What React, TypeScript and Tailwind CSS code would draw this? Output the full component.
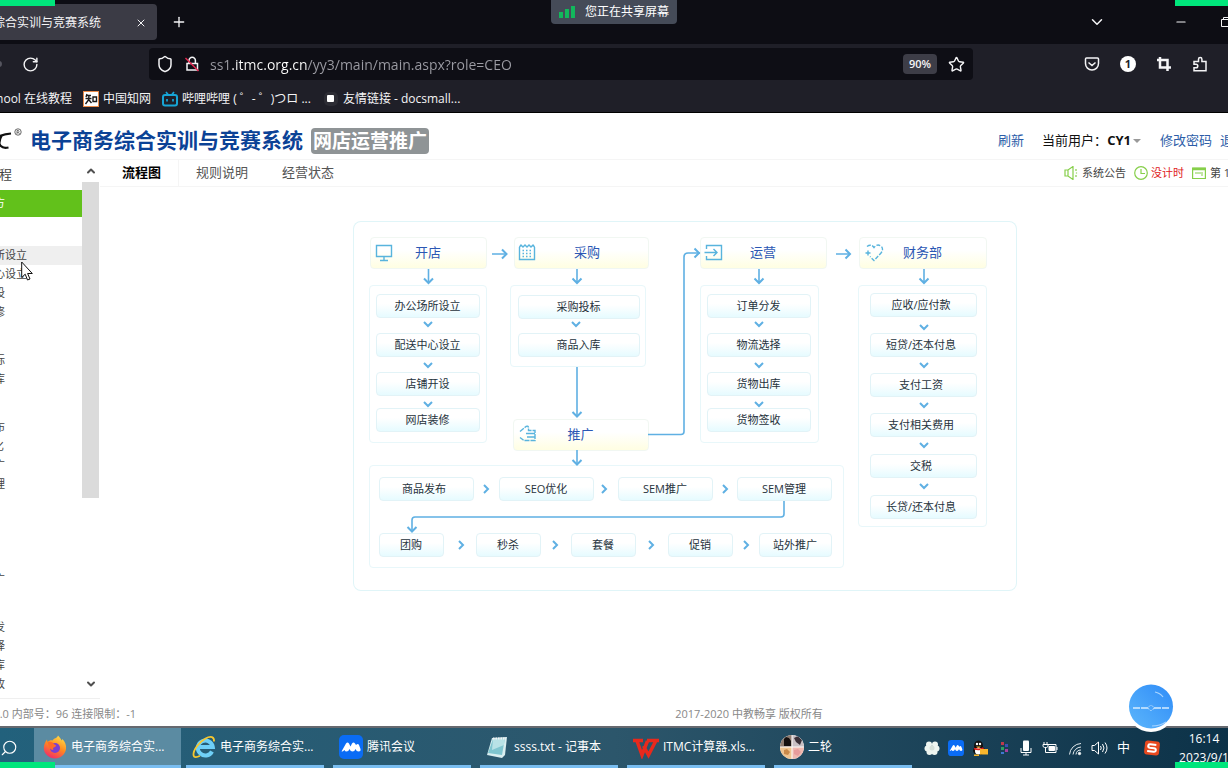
import React from 'react';
import {
    ChevronDown,
    ChevronUp,
    Minus,
    Plus,
    RotateCw,
    Search,
    Shield,
    Star,
    X,
} from 'lucide-react';

const menu = [
    { title: '开店', items: ['办公场所设立', '配送中心设立', '店铺开设', '网店装修'] },
    { title: '采购', items: ['采购投标', '商品入库'] },
    { title: '推广', items: ['商品发布', 'SEO优化', 'SEM推广', 'SEM管理', '团购', '秒杀', '套餐', '促销', '站外推广'] },
    { title: '运营', items: ['订单分发', '物流选择', '货物出库', '货物签收'] },
];

// places are relative to the diagram frame
const groups = [
    'left-[16px] top-[64px] w-[118px] h-[158px]',
    'left-[157px] top-[64px] w-[136px] h-[82px]',
    'left-[347px] top-[64px] w-[119px] h-[158px]',
    'left-[505px] top-[64px] w-[129px] h-[242px]',
    'left-[16px] top-[244px] w-[475px] h-[103px]',
];

const heads = [
    { text: '开店', place: 'left-[17px] top-[16px] w-[117px]' },
    { text: '采购', place: 'left-[161px] top-[16px] w-[135px] pl-3' },
    { text: '运营', place: 'left-[347px] top-[16px] w-[127px]' },
    { text: '财务部', place: 'left-[506px] top-[16px] w-[128px]' },
    { text: '推广', place: 'left-[160px] top-[198px] w-[136px]' },
];

const nodes = [
    { text: '办公场所设立', place: 'left-[23px] top-[73px] w-[104px]' },
    { text: '配送中心设立', place: 'left-[23px] top-[112px] w-[104px]' },
    { text: '店铺开设', place: 'left-[23px] top-[151px] w-[104px]' },
    { text: '网店装修', place: 'left-[23px] top-[187px] w-[104px]' },
    { text: '采购投标', place: 'left-[165px] top-[74px] w-[122px]' },
    { text: '商品入库', place: 'left-[165px] top-[112px] w-[122px]' },
    { text: '订单分发', place: 'left-[354px] top-[73px] w-[104px]' },
    { text: '物流选择', place: 'left-[354px] top-[112px] w-[104px]' },
    { text: '货物出库', place: 'left-[354px] top-[151px] w-[104px]' },
    { text: '货物签收', place: 'left-[354px] top-[187px] w-[104px]' },
    { text: '应收/应付款', place: 'left-[517px] top-[72px] w-[107px] pr-1' },
    { text: '短贷/还本付息', place: 'left-[517px] top-[112px] w-[107px] pr-1' },
    { text: '支付工资', place: 'left-[517px] top-[152px] w-[107px] pr-1' },
    { text: '支付相关费用', place: 'left-[517px] top-[192px] w-[107px] pr-1' },
    { text: '交税', place: 'left-[517px] top-[233px] w-[107px] pr-1' },
    { text: '长贷/还本付息', place: 'left-[517px] top-[274px] w-[107px] pr-1' },
    { text: '商品发布', place: 'left-[26px] top-[256px] w-[95px] pr-1' },
    { text: 'SEO优化', place: 'left-[146px] top-[256px] w-[95px]' },
    { text: 'SEM推广', place: 'left-[265px] top-[256px] w-[95px]' },
    { text: 'SEM管理', place: 'left-[384px] top-[256px] w-[95px]' },
    { text: '团购', place: 'left-[26px] top-[312px] w-[65px]' },
    { text: '秒杀', place: 'left-[123px] top-[312px] w-[65px]' },
    { text: '套餐', place: 'left-[218px] top-[312px] w-[65px]' },
    { text: '促销', place: 'left-[315px] top-[312px] w-[65px]' },
    { text: '站外推广', place: 'left-[406px] top-[312px] w-[73px]' },
];

const downChevrons = [
    [75, 103], [75, 144], [75, 183],
    [223, 103],
    [406, 103], [406, 144], [406, 183],
    [571, 106], [571, 144], [571, 184], [571, 224], [571, 265],
];

const rightChevrons = [
    [133, 268], [251, 268], [372, 268],
    [108, 324], [202, 324], [298, 324], [393, 324],
];

const Connectors: React.FC = () => (
    <svg className="absolute inset-0 h-full w-full" viewBox="0 0 664 370" fill="none" stroke="#5fb0e3" strokeWidth="1.6">
        {/* long lines */}
        <path d="M75.500 48v14M224 48v14M406 48v14M571 48v14M224 146v49M224 229v14" />
        <path d="M139 33h14M483 33h14" />
        <path d="M295 213.500h33q3 0 3-3V36q0-4 4-4h12" />
        <path d="M431 280v13q0 3-3 3H62q-3 0-3 3v11" />
        {/* arrow heads */}
        <g strokeWidth="2">
            <path d="M71 57.500l4.500 4.500 4.500-4.500M219.500 57.500l4.500 4.500 4.500-4.500M401.500 57.500l4.500 4.500 4.500-4.500M566.500 57.500l4.500 4.500 4.500-4.500" />
            <path d="M219.500 191l4.500 4.500 4.500-4.500M219.500 239l4.500 4.500 4.500-4.500M54.500 306l4.500 4.500 4.500-4.500" />
            <path d="M149 28.500l4.500 4.500-4.500 4.500M492.500 28.500l4.500 4.500-4.500 4.500M341.500 27.500l4.500 4.500-4.500 4.500" />
            {downChevrons.map(([x, y]) => (
                <path key={`${x}-${y}`} d={`M${x - 4} ${y - 2}l4 4 4-4`} />
            ))}
            {rightChevrons.map(([x, y]) => (
                <path key={`${x}-${y}`} d={`M${x - 2} ${y - 4}l4 4-4 4`} />
            ))}
        </g>
        {/* icons of the heads */}
        <g stroke="#58b4dd" strokeWidth="1.4">
            <path d="M23.500 24.500h15v11h-15zM31 36v3.500M27 39.500h8" />
            <path d="M166.500 26v12.500h15V26M166.500 26l1.500-2 2 2 2-2 2 2 2-2 2 2 2-2 1.500 2" />
            <path d="M169.500 29.500h10M169.500 32.500h10M169.500 35.500h10" strokeDasharray="1.500 2" />
            <path d="M353.500 28v-3.500h15v14h-15V35M351.500 31.500h12M360.500 28l3.500 3.500-3.500 3.500" />
            <path d="M514 25.500q4-3 7 1 3-4 7-1.500 3 3 0 7l-7 7.500-4-4" strokeDasharray="4 1.500" />
            <path d="M512.500 32h5M515 29.500v5" />
            <path d="M167 210.500l6-5q2-1 2.500 1v3h6.500v10h-11l-4-3" strokeDasharray="5 1" />
            <path d="M173 212.500h9M174 216h8" />
        </g>
    </svg>
);

const FlowChart: React.FC = () => (
    <section aria-label="流程图" className="relative h-[370px] w-[664px] shrink-0 rounded-lg ring-1 ring-[#e0f5f8] ring-inset">
        {groups.map((place) => (
            <div key={place} className={`absolute rounded border border-[#e8f7fa] ${place}`} />
        ))}
        {heads.map((head) => (
            <div
                key={head.text}
                className={`absolute flex h-8 items-center justify-center rounded-sm border border-[#f1f7f2] bg-linear-to-b from-white from-40% to-[#fffee2] text-[13px] text-[#2b57b4] ${head.place}`}
            >
                {head.text}
            </div>
        ))}
        {nodes.map((node) => (
            <div
                key={node.text}
                className={`absolute flex h-6 items-center justify-center rounded-sm border border-[#e2f3f7] bg-linear-to-b from-white from-40% to-[#e6fbff] text-[11px] whitespace-nowrap text-[#26323c] ${node.place}`}
            >
                {node.text}
            </div>
        ))}
        <Connectors />
    </section>
);

const MeetingIcon: React.FC<{ className: string }> = ({ className }) => (
    <svg className={className} viewBox="0 0 24 24">
        <rect width="24" height="24" rx="5" fill="#0a6cf5" />
        <path d="M2.500 16.500L7 8.500q1.500-2 3 0l1.500 3L13 8.500q1.500-2 3 0l1 1.500q2-2 3 0l1.500 4q.5 2.500-2 2.500-2 0-3-2.500-1 2.500-3 2.500t-3-2.500q-1 2.500-3 2.500-1.500 0-2-1.500-1 1.500-4 1.500z" fill="#fff" />
    </svg>
);

const FirefoxIcon: React.FC = () => (
    <svg className="size-6" viewBox="0 0 24 24">
        <defs>
            <linearGradient id="fox" x1="0.8" y1="0" x2="0.3" y2="1">
                <stop offset="0" stopColor="#ffe14a" />
                <stop offset="0.5" stopColor="#ff8a1f" />
                <stop offset="1" stopColor="#f2296b" />
            </linearGradient>
        </defs>
        <path d="M15 .5c2 2 3 3.500 3.500 5 .5-.5.7-1 .8-1.500C22 6.500 23.500 10 23 14c-.8 5.500-5.500 9.500-11 9.500S1 19 .8 13.500C.7 10 2 7 4 4.500l.5 2.500C6 5.500 8 5 9.500 5.500 11 3 14 3.500 15 .5z" fill="url(#fox)" />
        <circle cx="12" cy="13" r="5" fill="#7b3fd1" />
        <path d="M4.500 7C8 6 10 7.500 11.500 9.500c2 .5 2 1.500.5 2.500-2 .5-2.500 1.500-1.500 3-2.500 0-4-1.500-4.500-3z" fill="#ff6a2a" />
    </svg>
);

const IeIcon: React.FC = () => (
    <svg className="size-6" viewBox="0 0 24 24" fill="none">
        <path d="M20 16.500a7.500 7.500 0 1 1 .8-4.500H8" stroke="#6fd0f7" strokeWidth="4" />
        <path d="M22 6.500C22.500 2 19 .5 13.500 3.500 7 7 1 15 1.500 20c.3 3 3.500 2.500 6.500.8" stroke="#f6c72f" strokeWidth="1.800" />
    </svg>
);

const NotepadIcon: React.FC = () => (
    <svg className="size-6" viewBox="0 0 24 24">
        <path d="M6 3l15-1-2 18-3 3-15-3z" fill="#d9eef0" />
        <path d="M7 4l12-1-3 17-14-2z" fill="#7fc5cf" />
        <path d="M7 4l12-1-1 7-12 5z" fill="#b8e2e6" />
        <path d="M7 3.500h13" stroke="#f4f4f4" strokeWidth="2" strokeDasharray="1.500 1" />
    </svg>
);

const WpsIcon: React.FC = () => (
    <svg className="h-6 w-[26px]" viewBox="0 0 26 24" fill="none" stroke="#e8291c" strokeWidth="3.500">
        <path d="M0 5.500h10M4 6l5 14 5.500-14M10.500 11l5 9L23 5.500M14 5.500h12" />
    </svg>
);

const AvatarIcon: React.FC = () => (
    <svg className="size-6" viewBox="0 0 24 24">
        <defs>
            <clipPath id="avatar">
                <circle cx="12" cy="12" r="12" />
            </clipPath>
        </defs>
        <g clipPath="url(#avatar)">
            <rect width="24" height="24" fill="#fff" />
            <path d="M0 0h11.500v11.500H0z" fill="#8d7b70" />
            <path d="M4 4l2-2 3 1 2 3v5H4z" fill="#15100f" />
            <path d="M12.500 0H24v11.500H12.500z" fill="#c9c0c4" />
            <path d="M14 3l4-2 4 4-2 5-4-3z" fill="#3b3038" />
            <path d="M0 12.500h11.500V24H0z" fill="#efc490" />
            <path d="M4 15l3-1 3 3-2 3-4-1z" fill="#c98a4a" />
            <path d="M12.500 12.500H24V24H12.500z" fill="#f0b9b0" />
            <path d="M14 15l4-1 3 3-3 4-4-2z" fill="#e89c9c" />
        </g>
    </svg>
);

const tasks = [
    { text: '电子商务综合实...', icon: <FirefoxIcon />, active: true },
    { text: '电子商务综合实...', icon: <IeIcon /> },
    { text: '腾讯会议', icon: <MeetingIcon className="size-6" /> },
    { text: 'ssss.txt - 记事本', icon: <NotepadIcon /> },
    { text: 'ITMC计算器.xls...', icon: <WpsIcon /> },
    { text: '二轮', icon: <AvatarIcon /> },
];

const Browser: React.FC = () => (
    <header className="border-b border-black bg-[#1f1f28] text-[12px] text-[#f4f4f6]">
        <div className="flex h-11 items-center bg-[#0d0d14]">
            <div className="flex h-9 w-[157px] items-center justify-end gap-[34px] overflow-hidden rounded-r bg-[#3b3b45] pt-px pr-[10px]">
                <span className="shrink-0 whitespace-nowrap">电子商务综合实训与竞赛系统</span>
                <button aria-label="关闭标签页" className="shrink-0">
                    <X className="size-3" />
                </button>
            </div>
            <button aria-label="新标签页" className="ml-[14px]">
                <Plus className="size-4" />
            </button>
            <div className="-mr-2 ml-auto flex items-center">
                <button aria-label="所有标签页" className="mr-[68px]">
                    <ChevronDown className="size-[18px]" />
                </button>
                <button aria-label="最小化" className="mr-[32px]">
                    <Minus className="size-[14px]" />
                </button>
                <button aria-label="还原" className="mr-1">
                    <svg className="size-3" viewBox="0 0 12 12" fill="none" stroke="currentColor">
                        <path d="M1.500 3.500h7v7h-7zM3.500 3.500v-2h7v7h-2" />
                    </svg>
                </button>
            </div>
        </div>

        <div className="flex h-10 items-center">
            <div className="flex w-[149px] items-center">
                <span className="-ml-1 size-[6px] rounded-full bg-[#55555f]" />
                <button aria-label="刷新页面" className="ml-5">
                    <RotateCw className="size-[17px]" />
                </button>
            </div>
            <div className="flex h-8 flex-1 items-center rounded bg-[#0e0e15] pr-2 pl-[7px]">
                <Shield className="size-[18px]" />
                <svg className="ml-[10px] size-4" viewBox="0 0 16 16" fill="none" stroke="currentColor" strokeWidth="1.500">
                    <path d="M3 7.500h10.500v6.500H3zM5 7V4.500a3.200 3.200 0 0 1 6.400 0V7" />
                    <path d="M1.500 2l13 13" stroke="#e22850" />
                </svg>
                <input
                    aria-label="地址"
                    defaultValue="ss1.itmc.org.cn/yy3/main/main.aspx?role=CEO"
                    className="ml-[10px] min-w-0 flex-1 bg-[linear-gradient(to_right,#9c9ca4_22px,#ffffff_22px,#ffffff_97px,#9c9ca4_97px)] bg-clip-text text-[14px] text-transparent outline-none"
                />
                <button className="h-5 rounded bg-[#3d3d47] px-[6px] text-[11px] font-semibold">90%</button>
                <button aria-label="加入书签" className="ml-[11px]">
                    <Star className="size-[17px]" />
                </button>
            </div>
            <div className="flex w-[255px] items-center justify-end gap-[20px] overflow-hidden pr-5">
                <button aria-label="Pocket">
                    <svg className="size-4" viewBox="0 0 16 16" fill="none" stroke="currentColor" strokeWidth="1.500">
                        <path d="M1.500 3q0-1 1-1h11q1 0 1 1v4.500a6.500 6.500 0 0 1-13 0zM4.500 6.500L8 9.500l3.500-3" />
                    </svg>
                </button>
                <button aria-label="通知" className="size-4 rounded-full bg-white text-[11px] leading-4 font-bold text-[#1f1f28]">
                    1
                </button>
                <button aria-label="截图">
                    <svg className="size-4" viewBox="0 0 16 16" fill="none" stroke="currentColor" strokeWidth="2.500">
                        <path d="M4 1v10.500h11M1 4h10.500v11" />
                    </svg>
                </button>
                <button aria-label="扩展">
                    <svg className="size-4" viewBox="0 0 16 16" fill="none" stroke="currentColor" strokeWidth="1.500">
                        <path d="M2 8V5.500h4.500V3.200a1.700 1.700 0 0 1 3.400 0v2.300H14v9.300H2v-3h2a1.700 1.700 0 0 0 0-3.600H2z" />
                    </svg>
                </button>
            </div>
        </div>

        <nav className="flex h-7 items-center overflow-hidden pt-px whitespace-nowrap">
            <a href="#" className="flex w-[72px] justify-end">w3school 在线教程</a>
            <a href="#" className="ml-[11px] flex items-center gap-1">
                <svg className="size-4" viewBox="0 0 16 16">
                    <rect width="16" height="16" fill="#e98b4a" />
                    <rect x="1" y="1" width="14" height="14" fill="#fff" />
                    <path d="M4 3L3 6M3 4.500h5M2.500 7.500h6M6 4.500L5.500 9l-3 4M6 9l2.500 3M10 6h3.500v4.500H10z" fill="none" stroke="#1a1a1a" strokeWidth="1.400" />
                </svg>
                中国知网
            </a>
            <a href="#" className="ml-[11px] flex items-center gap-1">
                <svg className="size-4" viewBox="0 0 16 16" fill="none" stroke="#17a5d6" strokeWidth="2">
                    <rect x="1" y="4" width="14" height="10.500" rx="2" />
                    <path d="M4 1l2 2.500M12 1l-2 2.500M5 8v2.500M11 8v2.500" strokeWidth="1.700" />
                </svg>
                哔哩哔哩 ( ゜- ゜)つロ ...
            </a>
            <a href="#" className="ml-3 flex items-center gap-1">
                <svg className="size-4" viewBox="0 0 16 16">
                    <rect x="1" y="1" width="14" height="14" rx="5" fill="#2c2c34" />
                    <rect x="4" y="4" width="7" height="7" rx="1" fill="#fff" />
                </svg>
                友情链接 - docsmall...
            </a>
        </nav>
    </header>
);

const PageHeader: React.FC = () => (
    <div className="flex h-[47px] shrink-0 items-center overflow-hidden border-b border-[#f5f5f5] pt-[9px] whitespace-nowrap">
        <svg className="h-7 w-[30px] shrink-0" viewBox="0 0 30 28" fill="none">
            <path d="M11 6.500Q4 7-1 9.500M2 8q-3 5-2.500 9 2 5 9 3.500" stroke="#111" strokeWidth="2.200" />
            <circle cx="18" cy="5" r="3.200" stroke="#444" strokeWidth="0.800" />
            <path d="M17 7V3.500h1.500q1 1 0 1.800H17M18.500 5.300L19.500 7" stroke="#444" strokeWidth="0.700" />
        </svg>
        <h1 className="text-[21px] font-bold text-[#0b4296]">电子商务综合实训与竞赛系统</h1>
        <span className="ml-2 rounded bg-[#8f9496] px-[2px] text-[19px] leading-[26px] font-bold text-white">网店运营推广</span>
        <div className="-mr-[18px] ml-auto flex items-center text-[13px] text-[#2c5da8]">
            <a href="#" className="mr-[18px]">刷新</a>
            <span className="text-[#111]">当前用户：</span>
            <button className="mr-[19px] flex items-center gap-[2px] font-bold text-[#111]">
                CY1
                <span className="size-0 border-x-4 border-t-4 border-x-transparent border-t-[#999]" />
            </button>
            <a href="#" className="mr-2">修改密码</a>
            <a href="#">退出</a>
        </div>
    </div>
);

const Sidebar: React.FC = () => (
    <aside className="flex w-[100px] shrink-0 overflow-hidden border-b border-[#efefef]">
        <nav className="-ml-[60px] w-[142px] shrink-0 text-[11px] text-[#444]">
            <h2 className="flex h-[30px] items-center pl-5 text-[13px]">经营流程</h2>
            <a href="#" className="flex h-[27px] items-center bg-[#62c11b] pl-[43px] text-white">卖方</a>
            {menu.map((group) => (
                <div key={group.title}>
                    <h3 className="flex h-[29px] items-center pl-[21px]">{group.title}</h3>
                    {group.items.map((item) => (
                        <a
                            key={item}
                            href="#"
                            className={`flex h-[19px] items-center pl-[21px] ${item === '办公场所设立' ? 'bg-[#efefef]' : ''}`}
                        >
                            {item}
                        </a>
                    ))}
                </div>
            ))}
        </nav>
        <div className="flex w-[17px] shrink-0 flex-col items-center text-[#505050]">
            <ChevronUp className="my-[5px] size-3 shrink-0" strokeWidth={4} />
            <div className="h-[316px] w-full bg-[#dbdbdb]" />
            <ChevronDown className="mt-auto mb-2 size-3 shrink-0" strokeWidth={4} />
        </div>
    </aside>
);

const StatusBar: React.FC = () => (
    <div className="flex h-[27px] items-center overflow-hidden border-b border-[#f5f5f5] whitespace-nowrap">
        <div role="tablist" className="flex h-full items-center text-[13px] text-[#555]">
            <button role="tab" aria-selected="true" className="h-full border-r border-[#f5f5f5] pr-[17px] pl-[22px] font-bold text-black">
                流程图
            </button>
            <button role="tab" aria-selected="false" className="px-[17px]">规则说明</button>
            <button role="tab" aria-selected="false" className="px-[17px]">经营状态</button>
        </div>
        <div className="-mr-4 ml-auto flex items-center text-[11px] text-[#444]">
            <svg className="mr-1 size-[14px]" viewBox="0 0 14 14" fill="none" stroke="#86cf4a" strokeWidth="1.200">
                <path d="M1 4h3l5-3.500v13L4 10H1zM4 4v6M12 3v2M12.500 6.500v1M12 9v2" />
            </svg>
            <a href="#">系统公告</a>
            <svg className="mr-[3px] ml-2 size-[14px]" viewBox="0 0 14 14" fill="none" stroke="#86cf4a" strokeWidth="1.200">
                <circle cx="7" cy="7" r="6.300" />
                <path d="M7 3v4.500h4" />
            </svg>
            <span className="text-[#e02020]">没计时</span>
            <svg className="mr-1 ml-2 size-[14px]" viewBox="0 0 14 14" fill="none" stroke="#86cf4a" strokeWidth="1.200">
                <path d="M.600 2h12.800v10.500H.600zM3 7h8M9 9h2" />
                <path d="M.600 3h12.800" strokeWidth="2.500" />
            </svg>
            <span>第 1 年</span>
        </div>
    </div>
);

const Tray: React.FC = () => (
    <div className="ml-auto flex items-center text-white">
        <svg className="mr-2 size-4" viewBox="0 0 16 16" fill="#eef5f0">
            <circle cx="5" cy="4.500" r="3" />
            <circle cx="11" cy="4.500" r="3" />
            <circle cx="3.500" cy="8.500" r="3" />
            <circle cx="12.500" cy="8.500" r="3" />
            <circle cx="5.500" cy="12" r="3" />
            <circle cx="10.500" cy="12" r="3" />
            <circle cx="8" cy="8" r="2.500" fill="#d6e0d9" />
        </svg>
        <MeetingIcon className="mr-2 size-4" />
        <svg className="mr-2 size-4" viewBox="0 0 16 16">
            <ellipse cx="6.500" cy="6" rx="4.500" ry="5.500" fill="#111" />
            <ellipse cx="7" cy="10.500" rx="6" ry="4.500" fill="#111" />
            <ellipse cx="6.500" cy="11" rx="3.500" ry="3.500" fill="#fff" />
            <circle cx="5" cy="4" r="1.200" fill="#fff" />
            <circle cx="8" cy="4" r="1.200" fill="#fff" />
            <path d="M4 6.500h5l-2.500 1.500z" fill="#f5a623" />
            <path d="M2 8.500q5 2 9.500-.5" stroke="#e2231a" strokeWidth="1.800" fill="none" />
            <path d="M8 9h8v5.500H8zM2 14.500h5V16H2z" fill="#f8b62d" />
        </svg>
        <svg className="mr-[6px] size-4" viewBox="0 0 16 16">
            <path d="M5 2h3v3H5z" fill="#c03a4c" />
            <path d="M9 4h3v3H9z" fill="#3c4fb5" />
            <path d="M5 7h3v3H5z" fill="#2f9e62" />
            <path d="M9 9h3v3H9z" fill="#a63fa0" />
            <path d="M5 12h3v2H5z" fill="#3f77d0" />
        </svg>
        <svg className="mr-2 size-4" viewBox="0 0 16 16" fill="#fff">
            <rect x="5" y="0.500" width="6" height="10.500" rx="1" />
            <path d="M3 8v4.500h10V8M8 12v3M5 15h6" fill="none" stroke="#fff" />
        </svg>
        <svg className="mr-[9px] size-4" viewBox="0 0 16 16" fill="none" stroke="#fff">
            <path d="M5.500 4.500H14v8H3.500V9M15 7v3M2 2v2M5 2v2M1 4.500h5v2l-1.500 1h-2L1 6.500zM3.500 7.500V10" />
            <path d="M7 6.500h5.500v4H7z" fill="#fff" />
        </svg>
        <svg className="mr-2 size-4" viewBox="0 0 16 16" fill="none" stroke="#e4ecef">
            <path d="M2.500 14.500A12 12 0 0 1 14 3.500M6 14.500a8.500 8.500 0 0 1 8-7.500M9 14.500a5 5 0 0 1 5-4.500" />
            <circle cx="12.500" cy="13.500" r="1.200" fill="#fff" />
        </svg>
        <svg className="mr-2 h-4 w-[18px]" viewBox="0 0 18 16" fill="none" stroke="#fff">
            <path d="M1 5.500h2.500L7.500 2v12l-4-3.500H1zM9.500 6q1.500 2 0 4M11.500 4q3 4 0 8M14 2.500q4 5.500 0 11" />
        </svg>
        <span className="mr-[14px] text-[13px]">中</span>
        <svg className="size-4 rotate-6" viewBox="0 0 16 16">
            <rect x="0.500" y="1" width="15" height="14" rx="3" fill="#e8491f" />
            <path d="M12 4.500H6q-2 0-2 1.700T6 8h4q2 0 2 1.800t-2 1.700H3.500" fill="none" stroke="#fff" strokeWidth="2" />
        </svg>
        <div className="-mr-5 w-[88px] text-center text-[12px] leading-[19px]">
            <div>16:14</div>
            <div>2023/9/1</div>
        </div>
    </div>
);

const Taskbar: React.FC = () => (
    <footer className="flex h-[42px] shrink-0 items-center overflow-hidden border-t-2 border-[#66696f] bg-linear-to-r from-[#22617c] via-[#2c566b] via-50% to-[#0c3248] text-[12px] whitespace-nowrap text-white">
        <button aria-label="搜索" className="flex w-[34px]">
            <Search className="size-[18px] -scale-x-100" strokeWidth={1.500} />
        </button>
        {tasks.map((task, i) => (
            <button
                key={i}
                className={`flex h-full w-[147px] items-center ${task.active ? 'border-b-3 border-[#79bdf0] bg-[#5b8ba2] pt-px pl-[9px]' : 'pl-[5px]'}`}
            >
                {task.active ? (
                    <span className="flex items-center gap-1">{task.icon}{task.text}</span>
                ) : (
                    <span className="flex h-full w-[138px] items-center gap-1 border-b-3 border-[#79bdf0] pt-px pl-[6px]">{task.icon}{task.text}</span>
                )}
            </button>
        ))}
        <Tray />
    </footer>
);

const App: React.FC = () => {
    return (
        <div className="relative flex h-screen flex-col overflow-hidden bg-white font-['Open_Sans','Noto_Sans_CJK_SC',sans-serif]">
            <Browser />
            <PageHeader />
            <div className="flex min-h-0 flex-1">
                <Sidebar />
                <main className="flex min-w-0 flex-1 flex-col">
                    <StatusBar />
                    <div className="flex justify-center pt-[34px] pl-[41px]">
                        <FlowChart />
                    </div>
                </main>
            </div>
            <div className="flex h-[27px] shrink-0 items-center overflow-hidden pt-1 text-[11px] whitespace-nowrap text-[#888]">
                <span className="flex w-[136px] shrink-0 justify-end">版本号：V4.0 内部号：96 连接限制：-1</span>
                <span className="flex-1 pl-[134px] text-center">2017-2020 中教畅享 版权所有</span>
            </div>
            <Taskbar />

            {/* screen sharing overlay */}
            <div className="absolute top-0 left-1/2 flex h-6 -translate-x-1/2 items-center gap-[10px] rounded-b bg-[#454b58] px-2 text-[12px] whitespace-nowrap text-white">
                <svg className="h-3 w-4" viewBox="0 0 16 12" fill="#12b85c">
                    <path d="M0 6h4v6H0zM6 3h4v9H6zM12 0h4v12h-4z" />
                </svg>
                您正在共享屏幕
            </div>
            <div className="absolute top-0 left-0 h-[6px] w-[55px] bg-[#00e67c]" />
            <div className="absolute top-0 right-0 h-[6px] w-[53px] bg-[#00e67c]" />
            <div className="absolute bottom-0 left-0 h-[6px] w-[55px] bg-[#00e67c]" />
            <div className="absolute right-0 bottom-0 h-[6px] w-[53px] bg-[#00e67c]" />
            <svg className="absolute right-[53px] bottom-[36px] size-[48px]" viewBox="0 0 48 48">
                <defs>
                    <linearGradient id="ball" x1="1" y1="0" x2="0" y2="1">
                        <stop offset="0" stopColor="#2f8cf8" />
                        <stop offset="1" stopColor="#5cb6fb" />
                    </linearGradient>
                </defs>
                <circle cx="24" cy="24" r="24" fill="#fff" />
                <circle cx="24" cy="22.500" r="22" fill="url(#ball)" />
                <path d="M6 24h15M27 24h15" stroke="#d5ebff" strokeWidth="1.300" strokeDasharray="7 1" />
                <circle cx="24" cy="24" r="2.500" fill="none" stroke="#b5dbff" strokeDasharray="2 1" />
                <path d="M28 8q5 1 8 5M25 42q8 0 14-4" fill="none" stroke="#a8d4ff" strokeWidth="1.200" />
            </svg>
            <svg className="absolute top-[261px] left-[21px] h-5 w-3" viewBox="0 0 12 20">
                <path d="M.700 1v15.500l3.500-3.300L6.500 19l2.500-1-2.400-5.500h4.700z" fill="#fff" stroke="#111" />
            </svg>
        </div>
    );
};

export default App;
